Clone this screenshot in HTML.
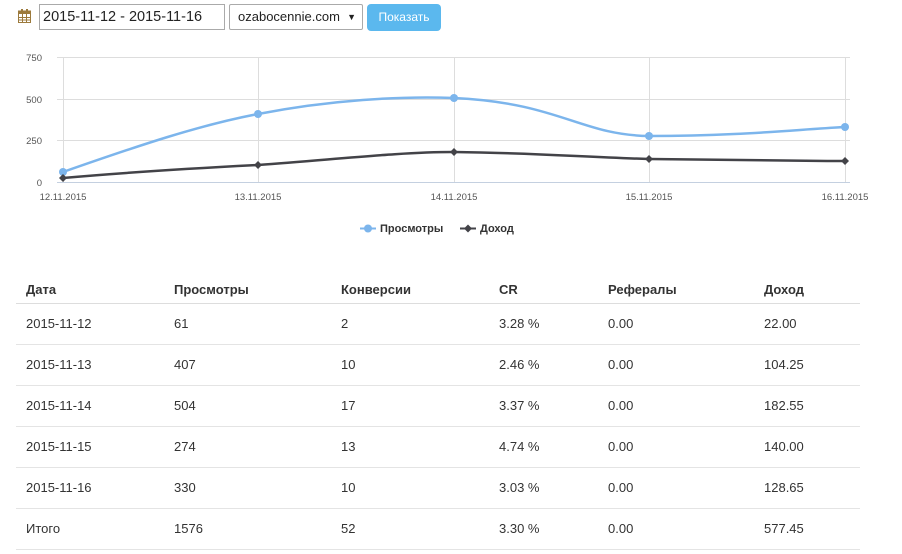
<!DOCTYPE html>
<html><head><meta charset="utf-8"><style>
body{margin:0;width:902px;height:554px;background:#fff;font-family:"Liberation Sans",Arial,sans-serif;position:relative;overflow:hidden;color:#333}
.abs{position:absolute}
.inp{position:absolute;top:4px;height:26px;border:1px solid #aaa;box-sizing:border-box;font-size:14px;line-height:24px;color:#222}
table{position:absolute;left:16px;top:268px;width:844px;border-collapse:collapse;font-size:13px;table-layout:fixed}
td,th{text-align:left;padding:0 10px;height:40px;border-bottom:1px solid #e4e4e4;font-weight:normal}
th{font-weight:bold;height:35px;padding-top:8px;box-sizing:border-box;border-bottom:1px solid #ddd}
</style></head><body>
<svg class="abs" style="left:18px;top:9px" width="13" height="14" viewBox="0 0 13 14"><rect x="0.5" y="2" width="12" height="11.5" fill="#fff" stroke="#9c7a3c"/><rect x="0.5" y="2" width="12" height="3" fill="#9c7a3c"/><path d="M4.5 5v8.5M8.5 5v8.5M1 8.5h11M1 11h11" stroke="#9c7a3c"/><rect x="3" y="0" width="2" height="3" fill="#9c7a3c"/><rect x="8" y="0" width="2" height="3" fill="#9c7a3c"/></svg>
<div class="inp" style="left:39px;width:186px;padding-left:3px;font-size:14.5px">2015-11-12 - 2015-11-16</div>
<div class="inp" style="left:229px;width:134px;padding-left:8px;border-radius:2px;font-size:13px">ozabocennie.com<span style="position:absolute;right:6px;top:0;font-size:9px">▼</span></div>
<div class="abs" style="left:367px;top:4px;width:74px;height:27px;background:#5bb8ee;border-radius:4px;color:#fff;font-size:12px;line-height:27px;text-align:center">Показать</div>
<svg class="abs" style="left:0;top:0" width="902" height="240">
<g stroke="#ddd" stroke-width="1"><path d="M57 57.5H850M57 99.5H850M57 140.5H850"/><path d="M63.5 57V182M258.5 57V182M454.5 57V182M649.5 57V182M845.5 57V182"/></g>
<path d="M57 182.5H850" stroke="#c4d0e0"/>
<g font-size="9.5" fill="#555" text-anchor="end"><text x="42" y="61">750</text><text x="42" y="103">500</text><text x="42" y="144">250</text><text x="42" y="186">0</text></g>
<g font-size="9.5" fill="#555" text-anchor="middle"><text x="63" y="200">12.11.2015</text><text x="258" y="200">13.11.2015</text><text x="454" y="200">14.11.2015</text><text x="649" y="200">15.11.2015</text><text x="845" y="200">16.11.2015</text></g>
<path d="M63 172C140 145 200 125 258 114C330 100 400 96 454 98C560 103 580 135 649 136C740 136 790 130 845 127" fill="none" stroke="#7cb5ec" stroke-width="2.5"/>
<g fill="#7cb5ec"><circle cx="63" cy="172" r="4"/><circle cx="258" cy="114" r="4"/><circle cx="454" cy="98" r="4"/><circle cx="649" cy="136" r="4"/><circle cx="845" cy="127" r="4"/></g>
<path d="M63 178C130 172 200 168 258 165C340 159 400 152 454 152C540 153 580 157 649 159C740 160 790 161 845 161" fill="none" stroke="#434348" stroke-width="2.5"/>
<g fill="#434348"><path d="M63 174l4 4-4 4-4-4z"/><path d="M258 161l4 4-4 4-4-4z"/><path d="M454 148l4 4-4 4-4-4z"/><path d="M649 155l4 4-4 4-4-4z"/><path d="M845 157l4 4-4 4-4-4z"/></g>
<path d="M360 228.5h16" stroke="#7cb5ec" stroke-width="2"/><circle cx="368" cy="228.5" r="4" fill="#7cb5ec"/>
<text x="380" y="232" font-size="11" font-weight="bold" fill="#333">Просмотры</text>
<path d="M460 228.5h16" stroke="#434348" stroke-width="2"/><path d="M468 224.5l4 4-4 4-4-4z" fill="#434348"/>
<text x="480" y="232" font-size="11" font-weight="bold" fill="#333">Доход</text>
</svg>
<table>
<tr><th style="width:148px">Дата</th><th style="width:167px">Просмотры</th><th style="width:158px">Конверсии</th><th style="width:109px">CR</th><th style="width:156px">Рефералы</th><th>Доход</th></tr>
<tr><td>2015-11-12</td><td>61</td><td>2</td><td>3.28 %</td><td>0.00</td><td>22.00</td></tr>
<tr><td>2015-11-13</td><td>407</td><td>10</td><td>2.46 %</td><td>0.00</td><td>104.25</td></tr>
<tr><td>2015-11-14</td><td>504</td><td>17</td><td>3.37 %</td><td>0.00</td><td>182.55</td></tr>
<tr><td>2015-11-15</td><td>274</td><td>13</td><td>4.74 %</td><td>0.00</td><td>140.00</td></tr>
<tr><td>2015-11-16</td><td>330</td><td>10</td><td>3.03 %</td><td>0.00</td><td>128.65</td></tr>
<tr><td>Итого</td><td>1576</td><td>52</td><td>3.30 %</td><td>0.00</td><td>577.45</td></tr>
</table>
</body></html>
